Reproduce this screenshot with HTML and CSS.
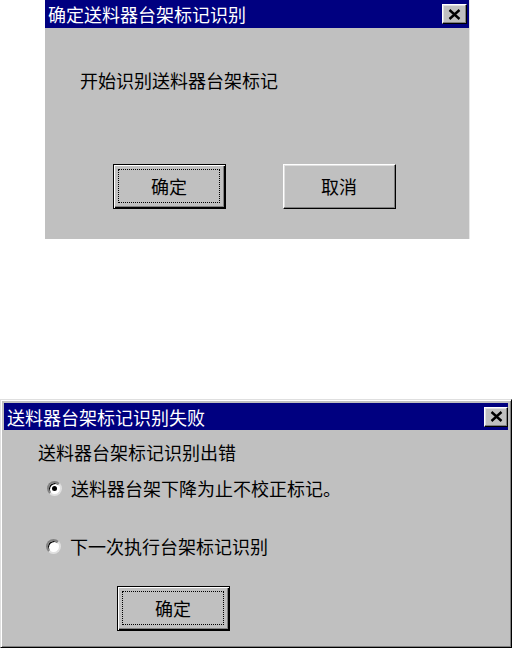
FILE: index.html
```html
<!DOCTYPE html>
<html lang="zh-CN">
  <head>
    <meta charset="UTF-8" />
    <meta name="viewport" content="width=device-width, initial-scale=1.0" />
    <title>送料器台架标记识别</title>
    <link rel="stylesheet" href="styles.css">
  </head>
  <body>
    <div class="page">
      <!-- 确认对话框 -->
      <div class="dialog dialog-confirm">
        <div class="title-bar">
          <span class="title-text">确定送料器台架标记识别</span>
          <button class="close-btn" type="button">
            <svg width="13" height="11" viewBox="0 0 13 11">
              <path d="M1.5 1L11.5 10M11.5 1L1.5 10" stroke="#000" stroke-width="2.4" fill="none" />
            </svg>
          </button>
        </div>
        <div class="dialog-body confirm-body">
          <p class="message">开始识别送料器台架标记</p>
          <div class="button-row">
            <button class="btn btn-default" type="button"><span class="focus">确定</span></button>
            <button class="btn" type="button"><span class="focus focus-none">取消</span></button>
          </div>
        </div>
      </div>

      <!-- 失败对话框 -->
      <div class="dialog dialog-error">
        <div class="title-bar">
          <span class="title-text">送料器台架标记识别失败</span>
          <button class="close-btn" type="button">
            <svg width="13" height="11" viewBox="0 0 13 11">
              <path d="M1.5 1L11.5 10M11.5 1L1.5 10" stroke="#000" stroke-width="2.4" fill="none" />
            </svg>
          </button>
        </div>
        <div class="dialog-body error-body">
          <p class="message">送料器台架标记识别出错</p>
          <label class="radio-row first">
            <span class="radio checked"></span>
            <span>送料器台架下降为止不校正标记。</span>
          </label>
          <label class="radio-row second">
            <span class="radio"></span>
            <span>下一次执行台架标记识别</span>
          </label>
          <div class="button-row single">
            <button class="btn btn-default" type="button"><span class="focus">确定</span></button>
          </div>
        </div>
      </div>
    </div>
  </body>
</html>
```

FILE: styles.css
```css
/* Estilos globales */
body {
  margin: 0;
  padding: 0;
  background-color: #ffffff;
  font-family: "Noto Sans CJK SC", "Noto Sans", sans-serif;
  font-size: 18px;
  color: #000;
}

.page {
  display: flex;
  flex-direction: column;
  align-items: flex-start;
}

.dialog {
  background-color: #c0c0c0;
  display: flex;
  flex-direction: column;
  box-sizing: border-box;
}

.dialog-confirm {
  margin-left: 45px;
  width: 425px;
  height: 239px;
  border-right: 1px solid #e8e8e8;
}

.dialog-error {
  margin-top: 160px;
  width: 512px;
  height: 249px;
  padding: 3px;
  border: 1px solid;
  border-color: #dfdfdf #000 #000 #dfdfdf;
  box-shadow: inset 1px 1px #fff, inset -1px -1px #808080;
}

.title-bar {
  background-color: #000080;
  color: #fff;
  height: 28px;
  display: flex;
  align-items: center;
  justify-content: space-between;
  padding: 0 2px 0 3px;
  flex-shrink: 0;
}

.dialog-error .title-bar {
  height: 27px;
  padding-right: 0;
}

.title-text {
  line-height: 28px;
  white-space: nowrap;
}

.close-btn {
  width: 25px;
  height: 20px;
  padding: 0;
  background-color: #c0c0c0;
  border: 1px solid;
  border-color: #fff #000 #000 #fff;
  box-shadow: inset -1px -1px #808080, inset 1px 1px #dfdfdf;
  display: flex;
  align-items: center;
  justify-content: center;
}

.dialog-error .close-btn {
  width: 24px;
  height: 20px;
}

.message {
  margin: 0;
  line-height: 20px;
  white-space: nowrap;
}

.confirm-body {
  padding: 42px 0 0 35px;
}

.confirm-body .button-row {
  margin-top: 74px;
  margin-left: 33px;
  gap: 57px;
}

.button-row {
  display: flex;
}

.btn {
  width: 113px;
  height: 45px;
  padding: 0;
  background-color: #c0c0c0;
  font-family: inherit;
  font-size: 18px;
  color: #000;
  border: 1px solid;
  border-color: #fff #000 #000 #fff;
  box-shadow: inset -1px -1px #808080, inset 1px 1px #dfdfdf;
  display: flex;
  align-items: stretch;
  justify-content: stretch;
}

.btn-default {
  border-color: #000;
  box-shadow: inset 1px 1px #fff, inset -1px -1px #000, inset -2px -2px #808080;
}

.focus {
  flex: 1;
  margin: 4px 5px 5px 4px;
  border: 1px dotted #000;
  display: flex;
  align-items: center;
  justify-content: center;
  line-height: 20px;
}

.focus-none {
  border-color: transparent;
}

.error-body {
  padding: 12px 0 0 34px;
}

.radio-row {
  display: flex;
  align-items: center;
  gap: 9px;
  line-height: 20px;
  margin-left: 9px;
  white-space: nowrap;
}

.radio-row.first {
  margin-top: 16px;
}

.radio-row.second {
  margin-top: 38px;
  margin-left: 8px;
}

.radio {
  width: 15px;
  height: 15px;
  box-sizing: border-box;
  border-radius: 50%;
  background-color: #fff;
  border: 2px solid;
  border-color: #808080 #e0e0e0 #e0e0e0 #808080;
  box-shadow: inset 1px 1px #000;
  display: flex;
  align-items: center;
  justify-content: center;
}

.radio.checked::after {
  content: "";
  width: 5px;
  height: 5px;
  border-radius: 50%;
  background-color: #000;
}

.button-row.single {
  margin-top: 30px;
  margin-left: 79px;
}
```
